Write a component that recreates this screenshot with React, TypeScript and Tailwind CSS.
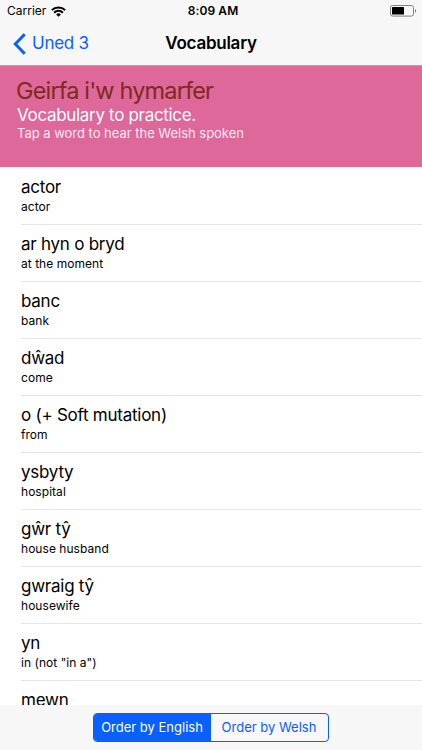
import { useState } from "react";

type SortOrder = "english" | "welsh";

interface VocabularyEntry {
  welsh: string;
  english: string;
}

const vocabulary: VocabularyEntry[] = [
  { welsh: "actor", english: "actor" },
  { welsh: "ar hyn o bryd", english: "at the moment" },
  { welsh: "banc", english: "bank" },
  { welsh: "dŵad", english: "come" },
  { welsh: "o (+ Soft mutation)", english: "from" },
  { welsh: "ysbyty", english: "hospital" },
  { welsh: "gŵr tŷ", english: "house husband" },
  { welsh: "gwraig tŷ", english: "housewife" },
  { welsh: "yn", english: "in (not \"in a\")" },
  { welsh: "mewn", english: "in a" },
];

const sortOptions: { value: SortOrder; label: string }[] = [
  { value: "english", label: "Order by English" },
  { value: "welsh", label: "Order by Welsh" },
];

// ─── Icons ──────────────────────────────────────────────────

function WifiIcon() {
  return (
    <svg width="15" height="11" viewBox="0 0 15 11" fill="none" stroke="black" strokeWidth="2">
      <path d="M0.8 4.1a9.6 9.6 0 0 1 13.4 0" />
      <path d="M3.1 6.7a6.2 6.2 0 0 1 8.8 0" />
      <path d="M7.5 10.8 5.1 8.4a3.4 3.4 0 0 1 4.8 0z" fill="black" stroke="none" />
    </svg>
  );
}

function BatteryIcon() {
  return (
    <svg width="27" height="12" viewBox="0 0 27 12" fill="none">
      <rect x="0.5" y="0.5" width="23" height="10.6" rx="2.2" stroke="#808080" />
      <rect x="2" y="2" width="12" height="7.6" rx="0.6" fill="black" />
      <path d="M25 4v3.8c1.5-.6 1.5-3.2 0-3.8z" fill="#808080" />
    </svg>
  );
}

function BackIcon() {
  return (
    <svg width="13" height="22" viewBox="0 0 13 22" fill="none" stroke="#0a60ff" strokeWidth="3">
      <path d="M11.7 1.3 2.3 11l9.4 9.7" />
    </svg>
  );
}

// ─── Rows ───────────────────────────────────────────────────

function VocabularyRow({ entry }: { entry: VocabularyEntry }) {
  return (
    <li className="ml-[21px] h-[57px] shrink-0 border-b border-[#e4e4e5] pt-2">
      <p className="text-[17px] leading-[22px] tracking-[-0.25px]">{entry.welsh}</p>
      <p className="mt-px text-[12px] leading-4 tracking-[0.04px]">{entry.english}</p>
    </li>
  );
}

export default function App() {
  const [sortOrder, setSortOrder] = useState<SortOrder>("english");

  const entries = sortOrder === "english"
    ? vocabulary
    : [...vocabulary].sort((a, b) => a.welsh.localeCompare(b.welsh, "cy"));

  return (
    <div className="flex h-[750px] w-[422px] flex-col overflow-hidden bg-white font-['Inter','Liberation_Sans',sans-serif] text-black">

      {/* STATUS BAR + NAVIGATION */}
      <header className="h-[66px] shrink-0 border-b border-[#b0a3a9] bg-[#f7f7f7]">
        <div className="grid h-[22px] grid-cols-3 items-center pr-[5px] pl-[7px] text-[12px]">
          <div className="flex items-center gap-[5px]">
            <span>Carrier</span>
            <WifiIcon />
          </div>
          <span className="pl-[2px] text-center font-semibold tracking-[0.1px]">8:09 AM</span>
          <div className="flex justify-end">
            <BatteryIcon />
          </div>
        </div>

        <div className="grid h-[43px] grid-cols-3 items-center pr-[13px] pl-[13px]">
          <button className="flex items-center gap-[6px] text-[17px] tracking-[-0.25px] text-[#0a60ff]">
            <BackIcon />
            Uned 3
          </button>
          <h1 className="pt-px text-center text-[17px] font-semibold tracking-[-0.25px]">Vocabulary</h1>
        </div>
      </header>

      {/* INTRO */}
      <section className="h-[101px] shrink-0 bg-[#dd6899] pt-[10px] pl-4">
        <h2 className="text-[23.5px] leading-[29px] tracking-[-0.85px] text-[#7f2a1b]">Geirfa i'w hymarfer</h2>
        <p className="pl-px text-[17px] leading-[20px] tracking-[-0.32px] text-white">Vocabulary to practice.</p>
        <p className="pl-px text-[13px] leading-[16px] tracking-[-0.02px] text-[#ffe8f3]">Tap a word to hear the Welsh spoken</p>
      </section>

      {/* WORD LIST */}
      <ul className="flex min-h-0 flex-1 flex-col overflow-y-auto pt-px [scrollbar-width:none]">
        {entries.map((entry) => (
          <VocabularyRow key={entry.welsh} entry={entry} />
        ))}
      </ul>

      {/* SORT TOOLBAR */}
      <footer className="flex h-[45px] shrink-0 justify-center bg-[#f7f7f7] pt-2">
        <div className="flex h-[29px] w-[236px] overflow-hidden rounded-[4px] border border-[#0a60ff]">
          {sortOptions.map((option) => (
            <button
              key={option.value}
              onClick={() => setSortOrder(option.value)}
              className={`flex-1 pt-px pr-px text-[13px] ${sortOrder === option.value ? "bg-[#0a60ff] text-white" : "text-[#0a60ff]"}`}
            >
              {option.label}
            </button>
          ))}
        </div>
      </footer>
    </div>
  );
}
